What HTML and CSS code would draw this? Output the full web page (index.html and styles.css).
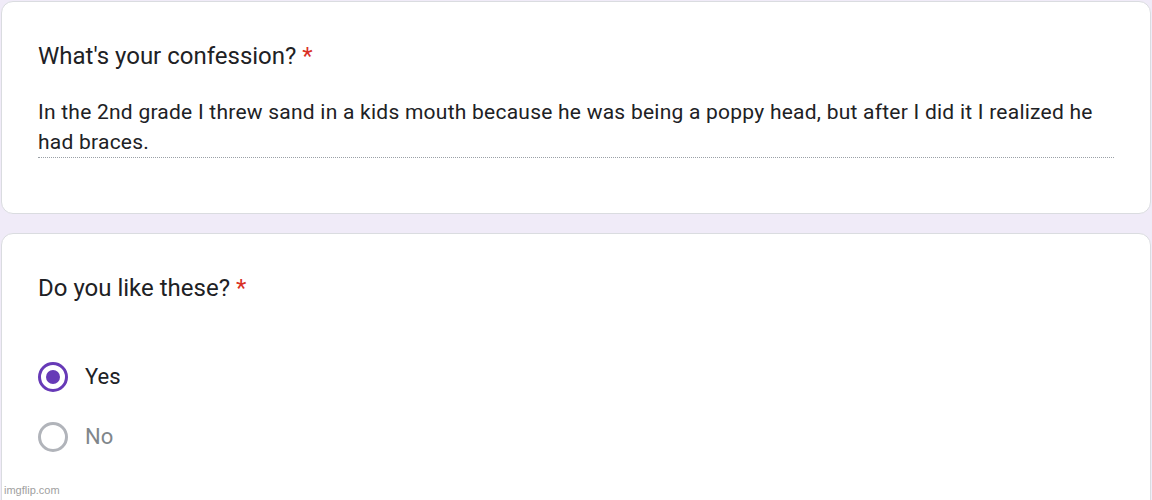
FILE: index.html
```html
<!DOCTYPE html>
<html lang="en">
<head>
<meta charset="utf-8">
<title>Form</title>
<link rel="stylesheet" href="styles.css">
</head>
<body>
<div class="page">
  <section class="card card-first">
    <div class="q-title">What's your confession? <span class="req">*</span></div>
    <div class="answer">In the 2nd grade I threw sand in a kids mouth because he was being a poppy head, but after I did it I realized he had braces.</div>
  </section>
  <section class="card card-second">
    <div class="q-title">Do you like these? <span class="req">*</span></div>
    <div class="options">
      <div class="option">
        <span class="radio radio-on"><span class="dot"></span></span>
        <span class="label">Yes</span>
      </div>
      <div class="option">
        <span class="radio radio-off"></span>
        <span class="label label-off">No</span>
      </div>
    </div>
  </section>
</div>
<div class="watermark">imgflip.com</div>
</body>
</html>
```
FILE: styles.css
```css
html, body {
  margin: 0;
  padding: 0;
}
body {
  background: #f0ebf8;
  width: 1152px;
  height: 500px;
  overflow: hidden;
  position: relative;
  font-family: Roboto, "Liberation Sans", sans-serif;
  color: #202124;
}
.page {
  padding: 1px 1px 0 1px;
  display: flex;
  flex-direction: column;
  gap: 19px;
}
.card {
  background: #fff;
  border: 1px solid #dadce0;
  border-radius: 12px;
  padding: 36px 36px 0 36px;
}
.card-first {
  height: 175px;
}
.card-second {
  height: 400px;
}
.q-title {
  font-size: 24px;
  line-height: 36px;
  letter-spacing: 0;
  color: #202124;
}
.req {
  color: #d93025;
}
.answer {
  margin-top: 23px;
  font-size: 21px;
  line-height: 30px;
  letter-spacing: 0.24px;
  color: #202124;
  border-bottom: 1px dotted #9aa0a6;
}
.options {
  margin-top: 41px;
  display: flex;
  flex-direction: column;
}
.option {
  display: flex;
  align-items: center;
  height: 60px;
}
.radio {
  box-sizing: border-box;
  width: 30px;
  height: 30px;
  border-radius: 50%;
  display: flex;
  align-items: center;
  justify-content: center;
  margin-right: 17px;
}
.radio-on {
  border: 3px solid #673ab7;
}
.radio-on .dot {
  width: 14px;
  height: 14px;
  border-radius: 50%;
  background: #673ab7;
}
.radio-off {
  border: 3px solid #b1b4ba;
}
.label {
  font-size: 22px;
  line-height: 30px;
  color: #202124;
}
.label-off {
  color: #80868b;
}
.watermark {
  position: absolute;
  left: 4px;
  bottom: 4px;
  font-family: "Liberation Sans", Arial, sans-serif;
  font-size: 11px;
  color: #a0a0a0;
}
```
